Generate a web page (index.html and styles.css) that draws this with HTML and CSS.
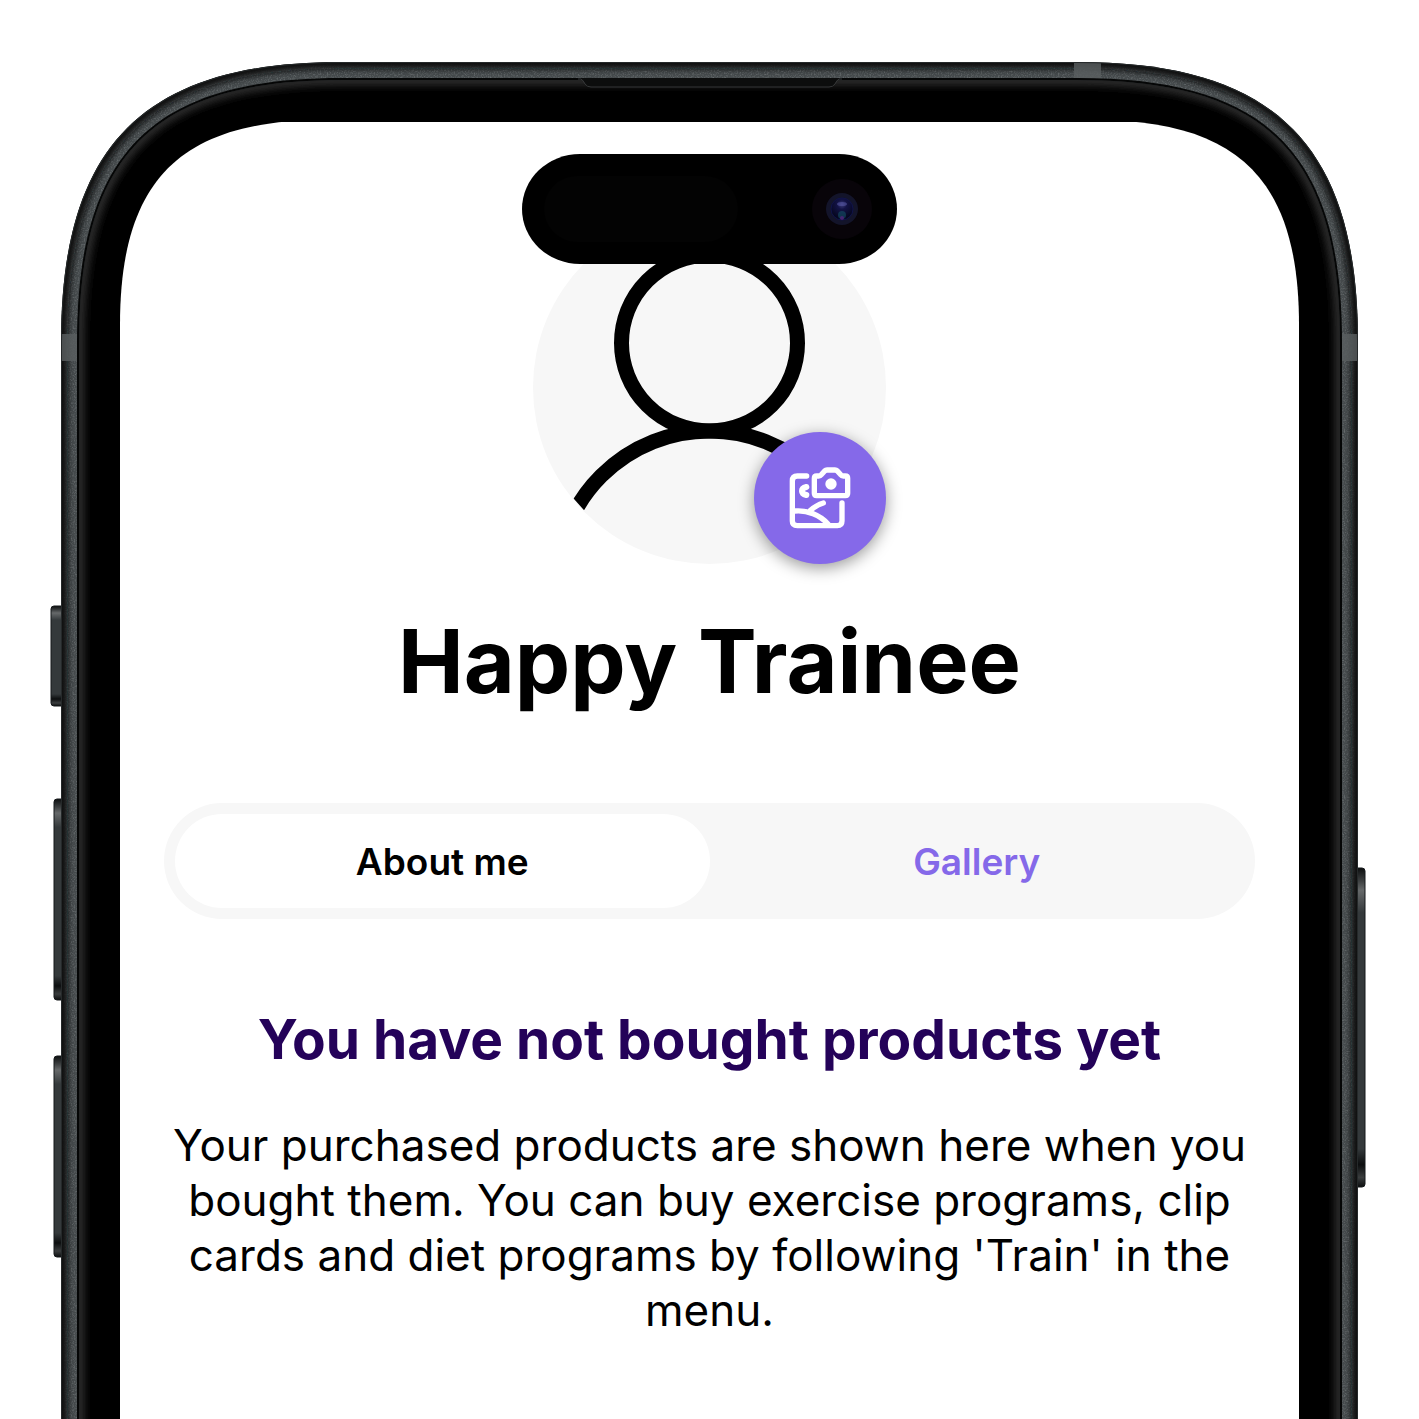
FILE: index.html
```html
<!DOCTYPE html>
<html lang="en">
<head>
<meta charset="utf-8">
<meta name="viewport" content="width=device-width, initial-scale=1">
<title>Happy Trainee – Profile</title>
<link rel="stylesheet" href="styles.css">
</head>
<body>
<div class="phone">
  <main class="profile">
    <div class="avatar">
      <svg class="avatar-image" viewBox="0 0 353 353" role="img" aria-label="Profile picture">
        <defs><clipPath id="avatar-clip"><circle cx="176.500" cy="176.500" r="175.500"/><rect x="0" y="0" width="353" height="120"/></clipPath></defs>
        <circle cx="176.500" cy="176.500" r="176.500" fill="#f7f7f7"/>
        <g clip-path="url(#avatar-clip)" fill="none" stroke="#000" stroke-width="15">
          <circle cx="176.500" cy="132" r="88"/>
          <circle cx="176.500" cy="373" r="153"/>
        </g>
      </svg>
      <button class="photo-button" type="button" aria-label="Change photo">
        <svg class="photo-icon" viewBox="146 140 186 186" fill="none" stroke="#fff" stroke-width="16" stroke-linecap="round" stroke-linejoin="round" aria-hidden="true">
          <path d="M199 167H171Q156 167 156 182V302Q156 316 171 316H291Q305 316 305 302V248"/>
          <path d="M198 200Q185 203 185 212Q185 221 198 224" stroke-width="18"/>
          <path d="M222 174Q222 167 229 167H235Q240 167 244 162L253 152Q256 149 260 149H284Q288 149 291 152L300 162Q304 167 309 167H315Q322 167 322 174V219Q322 226 315 226H229Q222 226 222 219Z"/>
          <circle cx="272" cy="191" r="17" fill="#fff" stroke="none"/>
          <path d="M163 272C200 268 240 285 263 311M249 248Q228 254 209 271"/>
        </svg>
      </button>
    </div>
    <h1 class="name">Happy Trainee</h1>
    <div class="tabs" role="tablist">
      <button class="tab tab-active" type="button" role="tab" aria-selected="true">About me</button>
      <button class="tab" type="button" role="tab" aria-selected="false">Gallery</button>
    </div>
    <h2 class="empty-title">You have not bought products yet</h2>
    <p class="empty-text">Your purchased products are shown here when you bought them. You can buy exercise programs, clip cards and diet programs by following 'Train' in the menu.</p>
  </main>

  <svg class="frame" viewBox="0 0 1419 1419" preserveAspectRatio="xMidYMin slice" aria-hidden="true">
    <defs>
      <path id="body" d="M61 1500V342C61 145 144 62 341 62H1078C1275 62 1358 145 1358 342V1500Z"/>
      <path id="bezel" d="M77 1500V342C77 153 152 78 341 78H1078C1267 78 1342 153 1342 342V1500Z"/>
      <path id="glass" d="M79 1500V342C79 154 153 80 341 80H1078C1266 80 1340 154 1340 342V1500Z"/>
      <clipPath id="body-clip"><use href="#body"/></clipPath>
      <clipPath id="glass-clip"><use href="#glass"/></clipPath>
      <mask id="screen-hole" maskUnits="userSpaceOnUse" x="0" y="0" width="1419" height="1500">
        <rect width="1419" height="1500" fill="#fff"/>
        <path d="M120 1500V325C120 180 180 120 325 120H1094C1239 120 1299 180 1299 325V1500Z" fill="#000"/>
        <rect x="120" y="119" width="1179" height="3" fill="#fff"/>
      </mask>
      <filter id="soft" x="-5%" y="-5%" width="110%" height="110%"><feGaussianBlur stdDeviation="3"/></filter>
      <filter id="glow" x="-5%" y="-5%" width="110%" height="110%"><feGaussianBlur stdDeviation="4"/></filter>
      <filter id="grain" x="0" y="0" width="100%" height="100%">
        <feTurbulence type="fractalNoise" baseFrequency="0.7" numOctaves="2" seed="4"/>
        <feColorMatrix values="0 0 0 0 0.7  0 0 0 0 0.75  0 0 0 0 0.76  1.6 0 0 0 -0.7"/>
      </filter>
      <linearGradient id="key" x1="0" y1="0" x2="0" y2="1">
        <stop offset="0" stop-color="#0c0e0f"/><stop offset=".04" stop-color="#3c3f40"/>
        <stop offset=".07" stop-color="#66696a"/><stop offset=".14" stop-color="#34393b"/>
        <stop offset=".88" stop-color="#34393b"/><stop offset=".93" stop-color="#0c0e0f"/>
        <stop offset=".97" stop-color="#3a3d3e"/><stop offset="1" stop-color="#0c0e0f"/>
      </linearGradient>
      <radialGradient id="lens" cx=".5" cy=".3" r=".6">
        <stop offset="0" stop-color="#3c3e7c"/><stop offset=".35" stop-color="#131346"/><stop offset="1" stop-color="#060720"/>
      </radialGradient>
    </defs>

    <g fill="url(#key)" stroke="#15181a">
      <rect x="51" y="606" width="14" height="100" rx="3"/>
      <rect x="54" y="799" width="12" height="201" rx="3"/>
      <rect x="54" y="1056" width="12" height="201" rx="3"/>
      <rect x="1353" y="868" width="12" height="319" rx="3"/>
    </g>

    <g mask="url(#screen-hole)">
      <g clip-path="url(#body-clip)">
        <use href="#body" fill="#454a4c"/>
        <rect x="0" y="0" width="1419" height="1419" filter="url(#grain)" opacity=".35"/>
        <use href="#body" fill="none" stroke="#0b0e0f" stroke-width="13" filter="url(#soft)"/>
        <g fill="#5a5f60">
          <rect x="1074" y="62" width="27" height="18" opacity=".8"/>
          <rect x="61" y="334" width="18" height="27" opacity=".8"/>
          <rect x="1340" y="334" width="18" height="27" opacity=".8"/>
        </g>
        <use href="#body" fill="none" stroke="#25292a" stroke-width="2"/>
      </g>
      <use href="#bezel" fill="#050606"/>
      <g clip-path="url(#glass-clip)">
        <use href="#glass" fill="#000"/>
        <use href="#glass" fill="none" stroke="#343434" stroke-width="9" filter="url(#glow)"/>
        <use href="#glass" fill="none" stroke="#222425" stroke-width="1"/>
      </g>
      <path d="M580 78L583 80L586 85Q587 87 591 87H829Q833 87 834 85L837 80L840 78Z" fill="#0c0d0d"/>
      <path d="M578 79H581Q583 80 585 84Q587 87 591 87H829Q833 87 835 84Q837 80 839 79H842" fill="none" stroke="#353738"/>
    </g>

    <rect x="522" y="154" width="375" height="110" rx="58" ry="55"/>
    <rect x="544" y="176" width="194" height="66" rx="33" fill="#030303"/>
    <circle cx="842" cy="209" r="30" fill="#080409"/>
    <circle cx="842" cy="209" r="16" fill="#13142a"/>
    <circle cx="842" cy="209" r="11" fill="url(#lens)" stroke="#10134a"/>
    <ellipse cx="842" cy="204" rx="5" ry="2" fill="#5555a0" opacity=".6"/>
    <circle cx="842" cy="215" r="4" fill="#145066" opacity=".6"/>
    <circle cx="842" cy="218" r="2" fill="#53207a" opacity=".8"/>
  </svg>
</div>
</body>
</html>
```
FILE: styles.css
```css
* {
  box-sizing: border-box;
}

body {
  margin: 0;
  background: #fff;
  color: #000;
  font-family: Inter, "Liberation Sans", sans-serif;
}

.phone {
  position: relative;
  min-height: 100vh;
  padding: 211px 11% 60px;
  overflow: hidden;
}

.frame {
  position: absolute;
  inset: 0;
  width: 100%;
  height: 100%;
  pointer-events: none;
}

.profile {
  display: flex;
  flex-direction: column;
  align-items: center;
  max-width: 1091px;
  margin: 0 auto;
  text-align: center;
}

.avatar {
  position: relative;
  width: 353px;
  height: 353px;
}

.avatar-image {
  display: block;
  width: 100%;
}

.photo-button {
  position: absolute;
  right: 0;
  bottom: 0;
  display: grid;
  place-items: center;
  width: 132px;
  height: 132px;
  padding: 0;
  border: 0;
  border-radius: 50%;
  background: #8569e9;
  box-shadow: 0 4px 16px rgba(0, 0, 0, 0.4);
  cursor: pointer;
}

.photo-icon {
  width: 62px;
  height: 62px;
}

.name {
  margin: 43px 0 0;
  font-size: 88px;
  font-weight: 700;
  line-height: 108px;
}

.tabs {
  display: grid;
  grid-template-columns: 1fr 1fr;
  width: 100%;
  margin-top: 88px;
  padding: 11px;
  border-radius: 58px;
  background: #f7f7f7;
}

.tab {
  height: 94px;
  padding: 0;
  border: 0;
  border-radius: 47px;
  background: transparent;
  color: #8569e9;
  font: inherit;
  font-size: 37px;
  font-weight: 600;
  cursor: pointer;
}

.tab-active {
  background: #fff;
  color: #000;
}

.empty-title {
  margin: 87px 0 0;
  color: #240259;
  font-size: 55px;
  font-weight: 700;
  line-height: 66px;
}

.empty-text {
  margin: 46px 0 0;
  font-size: 44px;
  line-height: 55px;
}
```
